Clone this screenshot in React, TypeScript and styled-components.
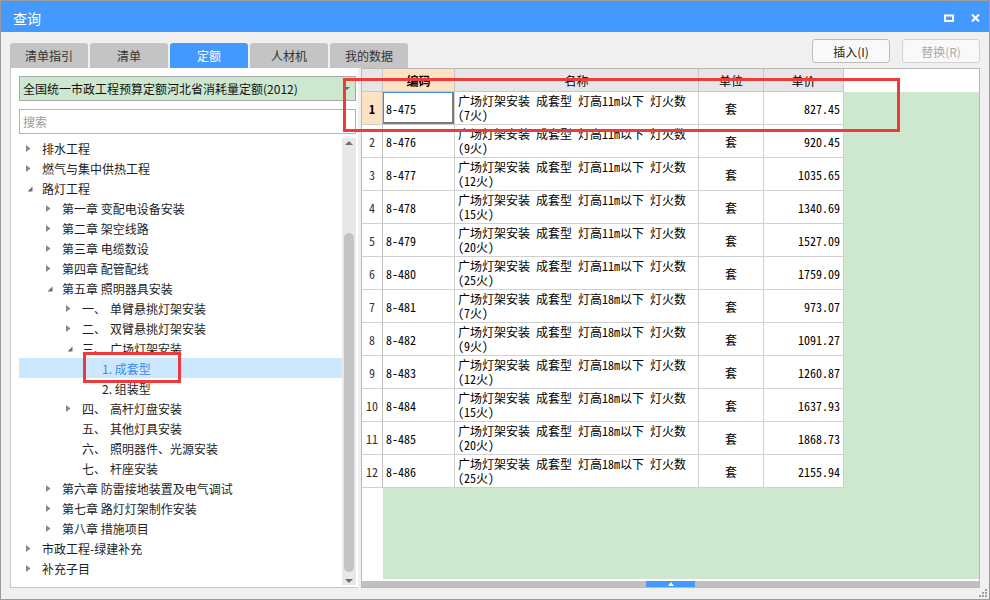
import React from 'react';
import styled, { createGlobalStyle } from 'styled-components';

const UI = `"Noto Sans CJK SC", "Noto Sans", sans-serif`;
const GRIDFONT = `"Noto Sans Mono CJK SC", "Noto Sans CJK SC", monospace`;

const GlobalStyle = createGlobalStyle`
  html, body { margin: 0; padding: 0; background: #fff; }
  body { font-family: ${UI}; }
  * { box-sizing: border-box; }
`;

const Window = styled.div`
  position: relative;
  width: 990px;
  height: 600px;
  border: 1px solid #9c9c9c;
  background: #f0f0f0;
  display: flex;
  flex-direction: column;
  overflow: hidden;
`;

const TitleBar = styled.div`
  height: 31px;
  flex: none;
  background: #4499ff;
  color: #fff;
  display: flex;
  align-items: center;
  justify-content: space-between;
  padding: 2px 9px 0 12px;
  font-size: 14px;
  font-family: ${UI};
`;

const TitleControls = styled.div`
  display: flex;
  align-items: center;
  gap: 17px;
`;

const Body = styled.div`
  flex: 1;
  min-height: 0;
  display: flex;
  flex-direction: column;
  padding: 0 9px 11px 9px;
`;

const Toolbar = styled.div`
  height: 36px;
  flex: none;
  display: flex;
  justify-content: space-between;
  align-items: flex-end;
`;

const Tabs = styled.div`
  display: flex;
  gap: 2px;
`;

const Tab = styled.div<{ $active?: boolean }>`
  width: 78px;
  height: 25px;
  border-radius: 3px 3px 0 0;
  background: ${(p) => (p.$active ? '#4499ff' : '#c4c4c4')};
  color: ${(p) => (p.$active ? '#fff' : '#333')};
  font-size: 12px;
  display: flex;
  align-items: center;
  justify-content: center;
`;

const ButtonGroup = styled.div`
  align-self: flex-start;
  margin-top: 7px;
  display: flex;
  gap: 12px;
`;

const Button = styled.div<{ $disabled?: boolean }>`
  width: 78px;
  height: 24px;
  border: 1px solid ${(p) => (p.$disabled ? '#d2d2d2' : '#bcbcbc')};
  border-radius: 3px;
  background: #f9f9f9;
  color: ${(p) => (p.$disabled ? '#a9a9a9' : '#222')};
  font-size: 12px;
  display: flex;
  align-items: center;
  justify-content: center;
`;

const Main = styled.div`
  flex: 1;
  min-height: 0;
  display: flex;
  gap: 3px;
`;

const LeftPanel = styled.div`
  width: 348px;
  flex: none;
  background: #fff;
  border-left: 1px solid #c6c6c6;
  border-bottom: 1px solid #c6c6c6;
  padding: 8px 2px 2px 8px;
  display: flex;
  flex-direction: column;
`;

const Dropdown = styled.div`
  height: 25px;
  flex: none;
  background: #cde8cf;
  border: 1px solid #a8a8a8;
  font-size: 12px;
  color: #111;
  padding-left: 3px;
  display: flex;
  align-items: center;
  justify-content: space-between;
`;

const DropArrow = styled.div`
  align-self: flex-start;
  margin-top: 10px;
  margin-right: 5px;
  width: 0;
  height: 0;
  border-left: 3px solid transparent;
  border-right: 3px solid transparent;
  border-top: 3px solid #666;
`;

const Search = styled.input`
  margin-top: 8px;
  height: 25px;
  flex: none;
  border: 1px solid #b4b4b4;
  background: #fff;
  font-size: 12px;
  font-family: ${UI};
  padding: 0 0 0 3px;
  outline: none;
  &::placeholder { color: #9c9c9c; }
`;

const TreeArea = styled.div`
  margin-top: 4px;
  flex: 1;
  min-height: 0;
  display: flex;
`;

const TreeList = styled.div`
  flex: 1;
  overflow: hidden;
`;

const TreeRow = styled.div<{ $level: number; $selected?: boolean }>`
  height: 20px;
  display: flex;
  align-items: center;
  padding-left: ${(p) => 7 + p.$level * 20}px;
  background: ${(p) => (p.$selected ? '#cce8ff' : 'transparent')};
  color: ${(p) => (p.$selected ? '#3b8de6' : '#1e1e1e')};
  font-size: 12px;
  white-space: nowrap;
`;

const Toggle = styled.span`
  width: 16px;
  flex: none;
  display: flex;
  align-items: center;
`;

const Prefix = styled.span`
  width: 28px;
  flex: none;
`;

const VScroll = styled.div`
  width: 14px;
  flex: none;
  background: #e8e8e8;
  display: flex;
  flex-direction: column;
  align-items: center;
  padding: 3px 0 2px;
`;

const ArrowUp = styled.div`
  width: 0;
  height: 0;
  border-left: 4px solid transparent;
  border-right: 4px solid transparent;
  border-bottom: 4px solid #707070;
`;

const ArrowDown = styled.div`
  width: 0;
  height: 0;
  border-left: 4px solid transparent;
  border-right: 4px solid transparent;
  border-top: 4px solid #707070;
`;

const VThumb = styled.div`
  margin-top: 88px;
  width: 10px;
  height: 339px;
  border-radius: 5px;
  background: #c3c3c3;
`;

const Spacer = styled.div`
  flex: 1;
`;

const Grid = styled.div`
  flex: 1;
  min-width: 0;
  background: #fff;
  border: 1px solid #b9b9b9;
  display: flex;
  flex-direction: column;
  font-family: ${GRIDFONT};
  font-size: 12px;
  color: #000;
`;

const HeaderRow = styled.div`
  height: 23px;
  flex: none;
  display: flex;
  background: #fff;
`;

const COLS = { num: 21, code: 72, name: 244, unit: 65, price: 80 };
type ColKey = keyof typeof COLS;

const HeadCell = styled.div<{ $col: ColKey; $hl?: boolean }>`
  width: ${(p) => COLS[p.$col]}px;
  flex: none;
  background: ${(p) => (p.$hl ? '#fde3c4' : '#e6e6e6')};
  border-right: 1px solid #c6c6c6;
  border-bottom: 1px solid #c6c6c6;
  font-family: ${UI};
  font-weight: ${(p) => (p.$hl ? 700 : 400)};
  display: flex;
  align-items: center;
  justify-content: center;
`;

const GridBody = styled.div`
  flex: 1;
  min-height: 0;
  display: flex;
  flex-direction: column;
  background: linear-gradient(to right, #fff 21px, #cde8cf 21px);
`;

const Row = styled.div`
  height: 33px;
  flex: none;
  display: flex;
`;

const Cell = styled.div<{ $col: ColKey }>`
  width: ${(p) => COLS[p.$col]}px;
  flex: none;
  background: #fff;
  border-right: 1px solid #d0d0d0;
  border-bottom: 1px solid #d0d0d0;
  overflow: hidden;
  white-space: nowrap;
`;

const NumCell = styled(Cell)<{ $active?: boolean }>`
  background: ${(p) => (p.$active ? '#fde3c4' : '#fff')};
  font-weight: ${(p) => (p.$active ? 700 : 400)};
  color: ${(p) => (p.$active ? '#000' : '#333')};
  border-right-color: #c0c0c0;
  display: flex;
  align-items: center;
  justify-content: center;
`;

const CodeCell = styled(Cell)<{ $focus?: boolean }>`
  display: flex;
  align-items: center;
  padding-left: 3px;
  box-shadow: ${(p) =>
    p.$focus ? 'inset 1px 1px 0 #3b8fe8, inset -2px -2px 0 #7a7a7a' : 'none'};
`;

const NameCell = styled(Cell)`
  padding: 2px 0 0 3px;
  line-height: 14px;
  white-space: pre;
`;

const UnitCell = styled(Cell)`
  display: flex;
  align-items: center;
  justify-content: center;
`;

const PriceCell = styled(Cell)`
  display: flex;
  align-items: center;
  justify-content: flex-end;
  padding-right: 3px;
`;

const HScroll = styled.div`
  height: 8px;
  flex: none;
  background: #fff;
  padding-top: 2px;
`;

const HTrack = styled.div`
  height: 6px;
  background: #c0c0c0;
  display: flex;
  padding-left: 284px;
`;

const HThumb = styled.div`
  width: 49px;
  height: 6px;
  background: #4499ff;
  display: flex;
  align-items: center;
  justify-content: center;
`;

const RedBox = styled.div<{ $x: number; $y: number; $w: number; $h: number }>`
  position: absolute;
  left: ${(p) => p.$x}px;
  top: ${(p) => p.$y}px;
  width: ${(p) => p.$w}px;
  height: ${(p) => p.$h}px;
  border: 3px solid #ef3a3c;
  pointer-events: none;
`;

const Grip = styled.svg`
  position: absolute;
  right: 1px;
  bottom: 1px;
`;

const Collapsed = () => (
  <svg width="5" height="7" viewBox="0 0 5 7">
    <path d="M0 0 L4.5 3.5 L0 7 Z" fill="#8a8a8a" />
  </svg>
);

const Expanded = () => (
  <svg width="6" height="6" viewBox="0 0 6 6" style={{ marginLeft: 1, marginTop: 1 }}>
    <path d="M5.5 0.5 L5.5 5.5 L0.5 5.5 Z" fill="#6e6e6e" />
  </svg>
);

type TreeItem = { level: number; state: 'c' | 'e' | 'n'; prefix?: string; text: string; selected?: boolean };

const tree: TreeItem[] = [
  { level: 0, state: 'c', text: '排水工程' },
  { level: 0, state: 'c', text: '燃气与集中供热工程' },
  { level: 0, state: 'e', text: '路灯工程' },
  { level: 1, state: 'c', text: '第一章 变配电设备安装' },
  { level: 1, state: 'c', text: '第二章 架空线路' },
  { level: 1, state: 'c', text: '第三章 电缆数设' },
  { level: 1, state: 'c', text: '第四章 配管配线' },
  { level: 1, state: 'e', text: '第五章 照明器具安装' },
  { level: 2, state: 'c', prefix: '一、', text: '单臂悬挑灯架安装' },
  { level: 2, state: 'c', prefix: '二、', text: '双臂悬挑灯架安装' },
  { level: 2, state: 'e', prefix: '三、', text: '广场灯架安装' },
  { level: 3, state: 'n', text: '1. 成套型', selected: true },
  { level: 3, state: 'n', text: '2. 组装型' },
  { level: 2, state: 'c', prefix: '四、', text: '高杆灯盘安装' },
  { level: 2, state: 'n', prefix: '五、', text: '其他灯具安装' },
  { level: 2, state: 'n', prefix: '六、', text: '照明器件、光源安装' },
  { level: 2, state: 'n', prefix: '七、', text: '杆座安装' },
  { level: 1, state: 'c', text: '第六章 防雷接地装置及电气调试' },
  { level: 1, state: 'c', text: '第七章 路灯灯架制作安装' },
  { level: 1, state: 'c', text: '第八章 措施项目' },
  { level: 0, state: 'c', text: '市政工程-绿建补充' },
  { level: 0, state: 'c', text: '补充子目' },
];

const rows = [
  ['8-475', '11', '7', '827.45'],
  ['8-476', '11', '9', '920.45'],
  ['8-477', '11', '12', '1035.65'],
  ['8-478', '11', '15', '1340.69'],
  ['8-479', '11', '20', '1527.09'],
  ['8-480', '11', '25', '1759.09'],
  ['8-481', '18', '7', '973.07'],
  ['8-482', '18', '9', '1091.27'],
  ['8-483', '18', '12', '1260.87'],
  ['8-484', '18', '15', '1637.93'],
  ['8-485', '18', '20', '1868.73'],
  ['8-486', '18', '25', '2155.94'],
];

export default function App() {
  return (
    <>
      <GlobalStyle />
      <Window>
        <TitleBar>
          <span>查询</span>
          <TitleControls>
            <svg width="10" height="8" viewBox="0 0 10 8">
              <rect x="1" y="1.5" width="8" height="5.5" fill="none" stroke="#fff" strokeWidth="2" />
            </svg>
            <svg width="9" height="8" viewBox="0 0 9 8">
              <path d="M1 0.5 L8 7.5 M8 0.5 L1 7.5" stroke="#fff" strokeWidth="2" />
            </svg>
          </TitleControls>
        </TitleBar>
        <Body>
          <Toolbar>
            <Tabs>
              <Tab>清单指引</Tab>
              <Tab>清单</Tab>
              <Tab $active>定额</Tab>
              <Tab>人材机</Tab>
              <Tab>我的数据</Tab>
            </Tabs>
            <ButtonGroup>
              <Button>插入(I)</Button>
              <Button $disabled>替换(R)</Button>
            </ButtonGroup>
          </Toolbar>
          <Main>
            <LeftPanel>
              <Dropdown>
                <span>全国统一市政工程预算定额河北省消耗量定额(2012)</span>
                <DropArrow />
              </Dropdown>
              <Search placeholder="搜索" readOnly />
              <TreeArea>
                <TreeList>
                  {tree.map((t, i) => (
                    <TreeRow key={i} $level={t.level} $selected={t.selected}>
                      <Toggle>
                        {t.state === 'c' && <Collapsed />}
                        {t.state === 'e' && <Expanded />}
                      </Toggle>
                      {t.prefix && <Prefix>{t.prefix}</Prefix>}
                      <span>{t.text}</span>
                    </TreeRow>
                  ))}
                </TreeList>
                <VScroll>
                  <ArrowUp />
                  <VThumb />
                  <Spacer />
                  <ArrowDown />
                </VScroll>
              </TreeArea>
            </LeftPanel>
            <Grid>
              <HeaderRow>
                <HeadCell $col="num" />
                <HeadCell $col="code" $hl>编码</HeadCell>
                <HeadCell $col="name">名称</HeadCell>
                <HeadCell $col="unit">单位</HeadCell>
                <HeadCell $col="price">单价</HeadCell>
              </HeaderRow>
              <GridBody>
                {rows.map((r, i) => (
                  <Row key={r[0]}>
                    <NumCell $col="num" $active={i === 0}>{i + 1}</NumCell>
                    <CodeCell $col="code" $focus={i === 0}>{r[0]}</CodeCell>
                    <NameCell $col="name">
                      {`广场灯架安装 成套型 灯高${r[1]}m以下 灯火数\n(${r[2]}火)`}
                    </NameCell>
                    <UnitCell $col="unit">套</UnitCell>
                    <PriceCell $col="price">{r[3]}</PriceCell>
                  </Row>
                ))}
              </GridBody>
              <HScroll>
                <HTrack>
                  <HThumb>
                    <svg width="6" height="4" viewBox="0 0 6 4">
                      <path d="M3 0 L6 4 L0 4 Z" fill="#fff" />
                    </svg>
                  </HThumb>
                </HTrack>
              </HScroll>
            </Grid>
          </Main>
        </Body>
        <RedBox $x={342} $y={77} $w={557} $h={54} />
        <RedBox $x={82} $y={351} $w={98} $h={31} />
        <Grip width="10" height="10" viewBox="0 0 10 10">
          <rect x="7" y="1" width="2" height="2" fill="#a0a0a0" />
          <rect x="4" y="4" width="2" height="2" fill="#a0a0a0" />
          <rect x="7" y="4" width="2" height="2" fill="#a0a0a0" />
          <rect x="1" y="7" width="2" height="2" fill="#a0a0a0" />
          <rect x="4" y="7" width="2" height="2" fill="#a0a0a0" />
          <rect x="7" y="7" width="2" height="2" fill="#a0a0a0" />
        </Grip>
      </Window>
    </>
  );
}
